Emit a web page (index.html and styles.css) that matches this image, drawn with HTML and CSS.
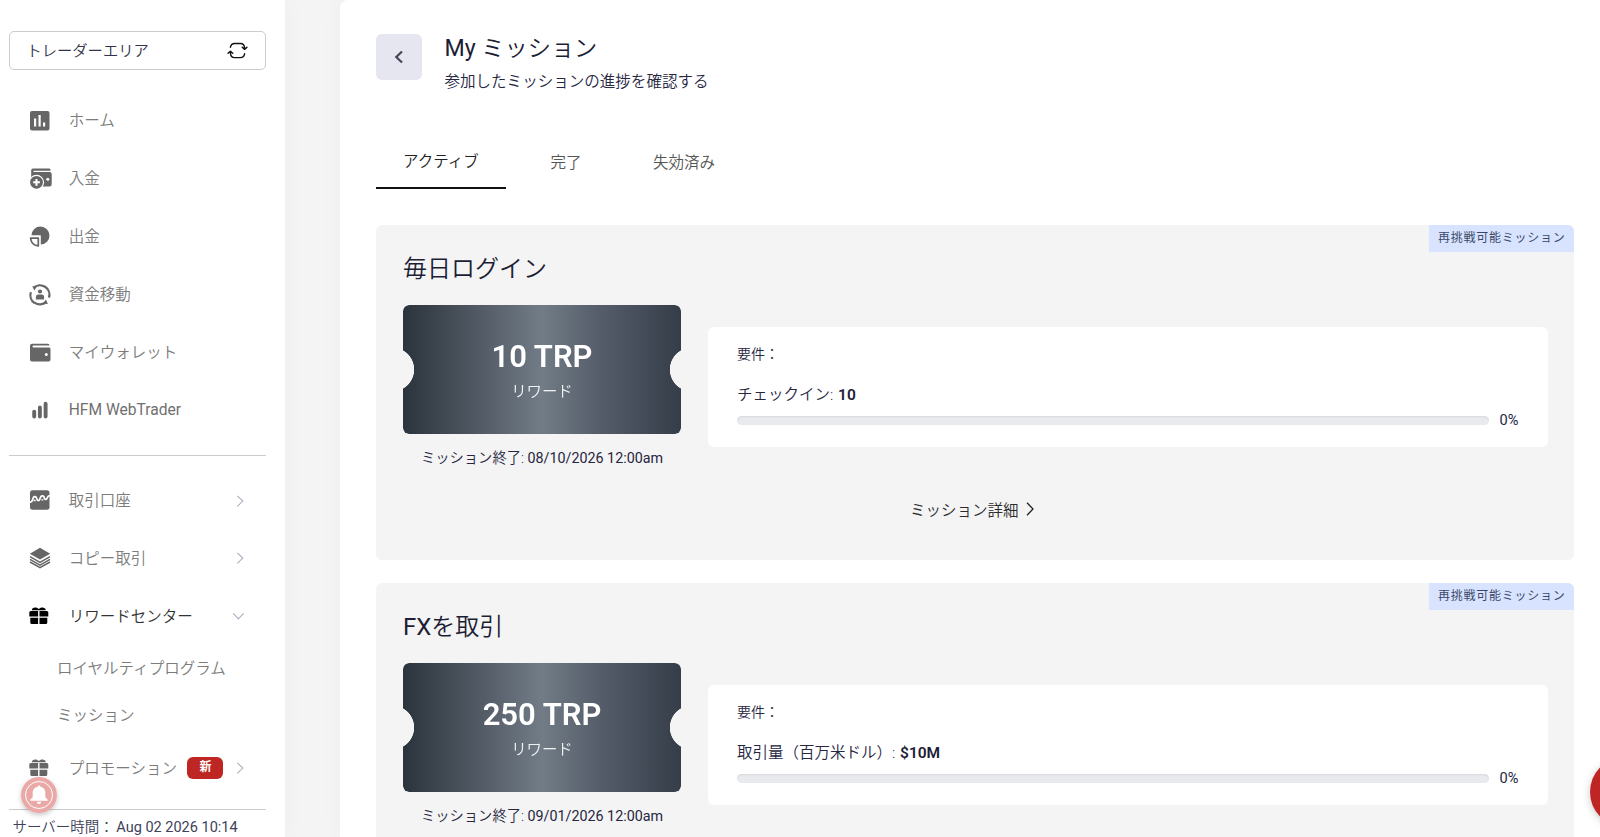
FILE: index.html
```html
<!DOCTYPE html>
<html lang="ja">
<head>
<meta charset="utf-8">
<title>My ミッション</title>
<link rel="stylesheet" href="styles.css">
</head>
<body>
<div class="app">
  <aside class="sidebar">
    <div class="area-select"><span>トレーダーエリア</span>
      <svg class="sync" viewBox="0 0 22 18" fill="none" stroke="#111" stroke-width="1.5" stroke-linecap="round" stroke-linejoin="round"><path d="M3.5 5.5C4 3 5.500 1.500 8 1.500h6c3 0 4.500 1.500 4.500 5.500M16 5.500l2.500 2.300L21 5.500M18.500 12.500c-.5 2.500-2 4-4.500 4H8c-3 0-4.500-1.500-4.500-5.500M1 12l2.500-2.300L6 12"/></svg>
    </div>
    <nav class="nav">
      <a class="item"><svg viewBox="0 0 22 22"><path fill="#666" fill-rule="evenodd" d="M3 1h15.500a2 2 0 0 1 2 2v15.500a2 2 0 0 1-2 2H3a2 2 0 0 1-2-2V3a2 2 0 0 1 2-2zM5 8.500v8h2.200v-8zM9.500 5v11.500h2.200V5zM14 12.500v4h2.200v-4z"/></svg><span>ホーム</span></a>
      <a class="item"><svg viewBox="0 0 22 22"><path fill="#666" d="M4 .5h16a1.500 1.500 0 0 1 1.500 1.300v1H4.500v1.300h16.200A2 2 0 0 1 22.700 6v10.300a2.300 2.300 0 0 1-2.300 2.300H2.200V2.300A1.800 1.800 0 0 1 4 .5z"/><circle cx="7.500" cy="14.300" r="7.600" fill="#fff"/><circle cx="7.500" cy="14.300" r="6.400" fill="#666"/><path stroke="#fff" stroke-width="2.100" d="M7.500 10.900v6.800M4.100 14.300h6.800"/><circle cx="18.800" cy="11.300" r="1.500" fill="#fff"/></svg><span>入金</span></a>
      <a class="item"><svg viewBox="0 0 22 22"><path fill="#666" d="M2.500 9.300a9 9 0 1 1 9.300 9.300V9.300z"/><path fill="none" stroke="#666" stroke-width="1.700" stroke-linejoin="round" d="M1.600 12.200h7.700v7.700C5 19.700 2 16.500 1.600 12.200z"/></svg><span>出金</span></a>
      <a class="item"><svg viewBox="0 0 22 22"><g fill="none" stroke="#666" stroke-width="2.200"><path d="M5.500 19.100A9.400 9.400 0 0 1 1.900 8.200M4.600 3.900A9.400 9.400 0 0 1 20 13.600M17.300 17.900A9.400 9.400 0 0 1 5.500 18.700"/></g><path fill="#666" d="M3.300 2.200l4.600.3-2.600 4zM18.900 20.100l-4.800-.6 2.800-4z"/><circle cx="11" cy="7.500" r="2.100" fill="#666"/><path fill="#666" d="M6.900 15.600v-2.800a2.400 2.400 0 0 1 2.400-2.400h3.400a2.400 2.400 0 0 1 2.400 2.400v2.800z"/></svg><span>資金移動</span></a>
      <a class="item"><svg viewBox="0 0 22 22"><path fill="#666" d="M3 1.800h16a1.600 1.600 0 0 1 1.500 1.600H4.500a1 1 0 0 0 0 2H20A1.500 1.500 0 0 1 21.500 7v10.500a2 2 0 0 1-2 2H3a2 2 0 0 1-2-2V3.800a2 2 0 0 1 2-2z"/><circle cx="17.300" cy="12.500" r="1.500" fill="#fff"/></svg><span>マイウォレット</span></a>
      <a class="item"><svg viewBox="0 0 22 22"><g stroke="#666" stroke-width="3.900" stroke-linecap="round"><path d="M5.200 12.600v4.900M10.900 8.500v9M16.600 4.700v12.800"/></g></svg><span class="latin">HFM WebTrader</span></a>
    </nav>
    <hr class="rule">
    <nav class="nav nav-groups">
      <a class="item"><svg viewBox="0 0 22 22"><rect x="1" y="1.300" width="19.500" height="19.500" rx="2.500" fill="#666"/><path fill="none" stroke="#fff" stroke-width="1.700" stroke-linejoin="round" stroke-linecap="round" d="M1.200 13.200l1.600-.7 1.600-4C5 7.300 6.700 7.300 7.300 8.500l1 2.300c.4.900 1.700.9 2.100 0l1.500-3.100c.6-1.200 2.400-1.200 2.900 0l.9 2.100c.4.900 1.600.8 2 0l1.500-2.600 1.100-.5"/><path fill="none" stroke="#fff" stroke-width="1.300" d="M4.500 11.500h2.200M12.300 10.800h2"/></svg><span>取引口座</span><i class="chev"></i></a>
      <a class="item"><svg viewBox="0 0 22 22"><path fill="#666" d="M11 .8l10.200 5.900L11 12.600.8 6.700z"/><path fill="none" stroke="#666" stroke-width="1.500" d="M1 9.600l10 5.700 10-5.700M1 12.400l10 5.700 10-5.700M1 15l10 5.700L21 15"/></svg><span>コピー取引</span><i class="chev"></i></a>
      <a class="item active"><svg viewBox="0 0 22 22"><use href="#gift"/></svg><span>リワードセンター</span><i class="chev down"></i></a>
      <a class="sub">ロイヤルティプログラム</a>
      <a class="sub">ミッション</a>
      <a class="item promo"><svg viewBox="0 0 22 22"><use href="#gift"/></svg><span>プロモーション</span><b class="new">新</b><i class="chev"></i></a>
    </nav>
    <hr class="rule rule-bottom">
    <div class="server">サーバー時間： <span class="latin">Aug 02 2026 10:14</span></div>
    <div class="bell"><svg viewBox="0 0 36 36"><circle cx="18" cy="18" r="18" fill="#eaa9a7"/><circle cx="18" cy="18" r="13.500" fill="none" stroke="#fff"/><path fill="#fff" d="M18 8.500c.9 0 1.400.6 1.400 1.300 3.300.6 4.900 3 4.900 6v4.400l2.400 2.600v1H9.300v-1l2.400-2.600v-4.400c0-3 1.600-5.400 4.900-6 0-.7.500-1.300 1.400-1.300zM15.800 24.800h4.400a2.200 2.200 0 0 1-4.400 0z"/></svg></div>
  </aside>
  <main class="main">
    <header class="head">
      <button class="back"><svg viewBox="0 0 10 14"><path d="M8 1.500L2.300 7 8 12.500" fill="none" stroke="#44465a" stroke-width="2.200"/></svg></button>
      <div><h1><span class="latin">My</span> ミッション</h1><p>参加したミッションの進捗を確認する</p></div>
    </header>
    <div class="tabs"><a class="tab on">アクティブ</a><a class="tab">完了</a><a class="tab">失効済み</a></div>
    <section class="card">
      <div class="badge">再挑戦可能ミッション</div>
      <h2>毎日ログイン</h2>
      <div class="row">
        <div class="left">
          <div class="ticket"><strong>10 TRP</strong><span>リワード</span></div>
          <div class="ends">ミッション終了: <span class="latin">08/10/2026 12:00am</span></div>
        </div>
        <div class="req"><div class="label">要件：</div><div class="goal">チェックイン: <b>10</b></div><div class="progress"><div class="bar"></div><span>0%</span></div></div>
      </div>
      <a class="more">ミッション詳細<svg viewBox="0 0 8 14"><path d="M1 .8L7 7 1 13.200" fill="none" stroke="#222" stroke-width="1.300"/></svg></a>
    </section>
    <section class="card">
      <div class="badge">再挑戦可能ミッション</div>
      <h2><span class="latin">FX</span>を取引</h2>
      <div class="row">
        <div class="left">
          <div class="ticket"><strong>250 TRP</strong><span>リワード</span></div>
          <div class="ends">ミッション終了: <span class="latin">09/01/2026 12:00am</span></div>
        </div>
        <div class="req"><div class="label">要件：</div><div class="goal">取引量（百万米ドル）: <b>$10M</b></div><div class="progress"><div class="bar"></div><span>0%</span></div></div>
      </div>
    </section>
  </main>
  <div class="chat"></div>
</div>
<svg width="0" height="0" class="defs"><defs><g id="gift"><path d="M.3 7.500A1.500 1.500 0 0 1 1.800 6H9.100v5.500H.3zM10.500 6h7.300A1.500 1.500 0 0 1 19.300 7.500v4h-8.800zM1.300 12.700h7.800v6.300H2.800A1.500 1.500 0 0 1 1.300 17.500zM10.500 12.700h7.800v4.800a1.500 1.500 0 0 1-1.500 1.500h-6.300zM2.800 5.300C2.800 2 7.800 1.500 9.800 4c2-2.500 7-2 7 1.300z"/></g></defs></svg>
</body>
</html>
```
FILE: styles.css
```css
* { box-sizing: border-box; }
body { margin: 0; height: 837px; overflow: hidden; background: #f4f4f4; color: #26263f;
  font-family: Roboto, "Noto Sans CJK JP", sans-serif; font-weight: 350; font-size: 15.500px; }
h1, h2, p { margin: 0; font-weight: 350; }
.latin { font-weight: 450; }
.defs { position: absolute; }
.app { position: relative; display: flex; height: 837px; overflow: hidden; }

.sidebar { position: relative; width: 285px; flex: none; padding: 31px 19.500px 0 9.400px; background: #fff; box-shadow: 0 0 24px rgba(0,0,0,.03); }
.area-select { height: 39px; border: 1px solid #ccc; border-radius: 5px; display: flex; align-items: center; justify-content: space-between; padding: 0 17px 4px 16px; font-size: 15.300px; color: #33344c; }
.sync { width: 21px; height: 17px; margin-top: 4px; }
.nav { display: flex; flex-direction: column; color: #7c7c7c; margin-top: 22px; }
.item { display: flex; align-items: center; height: 57.900px; padding-left: 19.300px; white-space: nowrap; }
.item > svg { width: 22px; height: 22px; margin-right: 18px; fill: #666; overflow: visible; }
.item.active { color: #333; }
.item.active > svg { fill: #000; }
.item > span { padding-bottom: 3px; }
.item > .latin { font-weight: 450; font-size: 15.600px; padding: 0; color: #707070; }
.chev { width: 7.500px; height: 7.500px; border: solid #a8a8bc; border-width: 1.800px 1.800px 0 0; transform: rotate(45deg); margin-left: auto; margin-right: 24px; }
.chev.down { transform: translate(1px, -2px) rotate(135deg); }
.rule { border: 0; height: 1px; background: #ccc; margin: 16px 0 0; }
.nav-groups { margin-top: 15px; }
.sub { height: 47px; line-height: 48px; padding-left: 47.700px; }
.nav-groups .promo { height: 58px; }
.new { background: #bd2623; color: #fff; width: 36px; height: 22px; line-height: 21px; border-radius: 6px; font-size: 12px; text-align: center; font-weight: 700; margin-left: 10.500px; }
.rule-bottom { margin-top: 12px; }
.server { font-size: 14.500px; line-height: 21px; padding: 7px 0 0 3px; white-space: nowrap; color: #40415a; }
.server .latin { margin-left: -1px; }
.bell { position: absolute; left: 21px; top: 776.500px; width: 36px; height: 36px; border-radius: 50%; box-shadow: 0 2px 5px rgba(0,0,0,.22); }
.bell svg { display: block; }

.main { margin-left: 55.400px; flex: 1; background: #fff; border-radius: 8px 0 0 0; padding: 34px 25.600px 0 35.600px; box-shadow: 0 0 24px rgba(0,0,0,.03); }
.head { display: flex; height: 108px; }
.back { width: 46px; height: 46px; border: 0; border-radius: 6px; background: #e5e6ef; padding: 0; margin-right: 22.500px; display: flex; align-items: center; justify-content: center; }
.back svg { width: 10px; height: 14px; }
h1, h2 { color: #1d1d35; }
h1 { font-size: 23.200px; line-height: 28px; white-space: nowrap; }
.head p { font-size: 15.540px; line-height: 24px; margin-top: 8px; }
.tabs { display: flex; height: 47px; margin-bottom: 36px; color: #555; }
.tab { line-height: 43px; padding: 0 27px; margin-right: 17.500px; }
.tab.on { width: 130px; color: #222; border-bottom: 2px solid #111; line-height: 41px; }

.card { position: relative; height: 335px; background: #f4f4f4; border-radius: 6px; margin-bottom: 23px; padding: 27px 26px 0 27px; }
.badge { position: absolute; right: 0; top: 0; width: 145.500px; height: 27px; line-height: 27px; background: #d8e4ff; border-radius: 0 6px 0 0; font-size: 12px; letter-spacing: .75px; padding-left: 9px; color: #3a4868; font-weight: 400; white-space: nowrap; }
h2 { font-size: 24px; line-height: 34px; }
.row { display: flex; margin-top: 19px; }
.left { width: 278px; margin-right: 27px; }
.ticket { height: 129px; border-radius: 6px; color: #fff; display: flex; flex-direction: column; align-items: center; padding-top: 34px;
  background: linear-gradient(90deg, #2b343d 0%, #404852 15%, #727c86 50%, #555e6a 70%, #353d49 100%);
  -webkit-mask: radial-gradient(circle 22.300px at -10.800px 50%, transparent 97%, #000) left / 51% 100% no-repeat, radial-gradient(circle 22.300px at calc(100% + 10.800px) 50%, transparent 97%, #000) right / 50% 100% no-repeat; }
.ticket strong { font-size: 31px; line-height: 36px; font-weight: 600; }
.ticket span { font-size: 15.400px; line-height: 24px; margin-top: 5px; color: #f0f1f3; }
.ends { text-align: center; font-size: 14.300px; line-height: 24px; margin-top: 12px; white-space: nowrap; }
.req { flex: 1; height: 120px; margin-top: 22px; background: #fff; border-radius: 6px; padding: 16px 30px 0 29px; }
.label { font-size: 14px; line-height: 22px; }
.goal { font-size: 15.500px; line-height: 24px; margin-top: 18px; }
.goal b { font-weight: 600; color: #1d1d35; margin-left: 1px; }
.progress { display: flex; align-items: center; height: 20px; margin-top: 3px; font-size: 14.600px; font-weight: 450; }
.bar { flex: 1; height: 9px; border-radius: 5px; background: #e9eaee; box-shadow: inset 0 1px 2px rgba(0,0,0,.08); }
.progress span { width: 29px; text-align: right; }
.more { display: flex; justify-content: center; align-items: center; height: 24px; margin: 27px 7px 0 0; color: #2c2c2c; font-size: 15.500px; }
.more svg { width: 8px; height: 14px; margin-left: 8px; }
.chat { position: absolute; left: 1590px; top: 757px; width: 70px; height: 70px; border-radius: 50%; background: #bd2623; box-shadow: 0 2px 8px rgba(0,0,0,.2); }
```
